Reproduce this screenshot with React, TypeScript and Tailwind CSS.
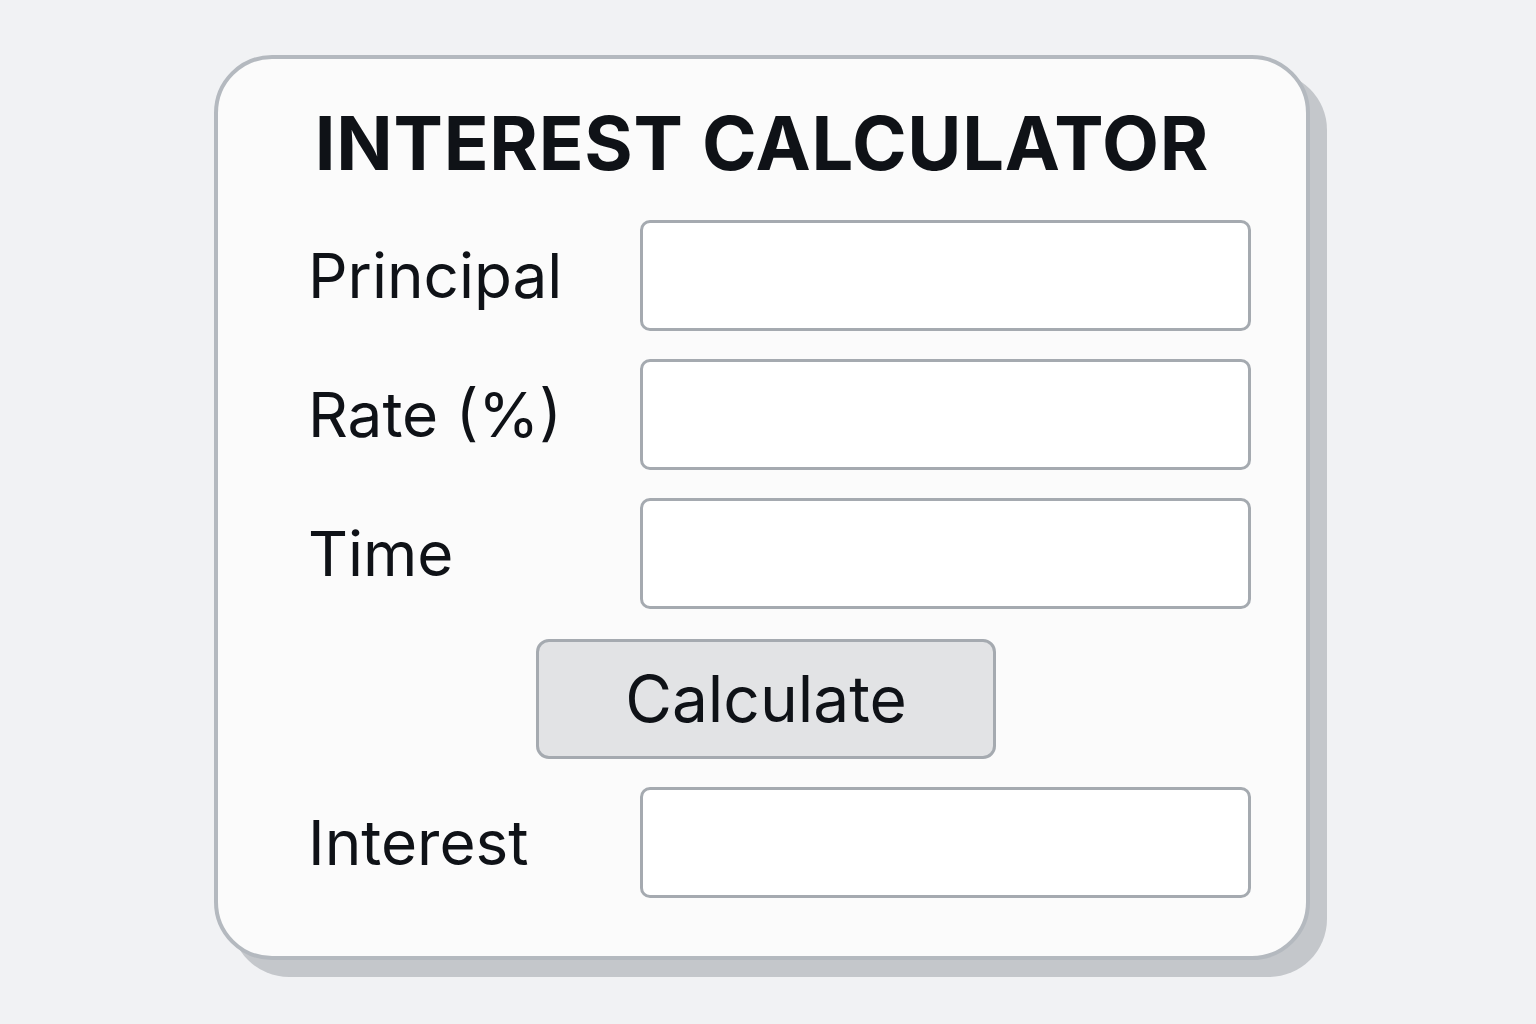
export default function App() {
  const rows = ["Principal", "Rate (%)", "Time"];
  return (
    <div className="min-h-[1024px] w-[1536px] bg-[#f1f2f4] pt-[55px] pl-[214px] font-['Inter',sans-serif] text-[#0f1217]">
      <div className="w-[1096px] h-[905px] rounded-[58px] border-4 border-[#b4b9bf] bg-[#fbfbfb] shadow-[17px_17px_0_0_#c4c7cb] pt-[47px]">
        <h1 className="text-center text-[74px] leading-[74px] font-bold tracking-[0.01em]">INTEREST CALCULATOR</h1>
        <div className="mt-[40px] pl-[90px] flex flex-col gap-[28px]">
          {rows.map((label) => (
            <div key={label} className="flex items-center h-[111px]">
              <span className="w-[332px] text-[62px] leading-none">{label}</span>
              <div className="w-[611px] h-[111px] rounded-[10px] border-[3px] border-[#a5aab0] bg-white" />
            </div>
          ))}
          <div className="flex h-[120px] mt-[2px]">
            <button className="ml-[228px] w-[460px] h-[120px] rounded-[13px] border-[3px] border-[#a5aab0] bg-[#e2e3e5] text-[64px] leading-none">
              Calculate
            </button>
          </div>
          <div className="flex items-center h-[111px]">
            <span className="w-[332px] text-[62px] leading-none">Interest</span>
            <div className="w-[611px] h-[111px] rounded-[10px] border-[3px] border-[#a5aab0] bg-white" />
          </div>
        </div>
      </div>
    </div>
  );
}
